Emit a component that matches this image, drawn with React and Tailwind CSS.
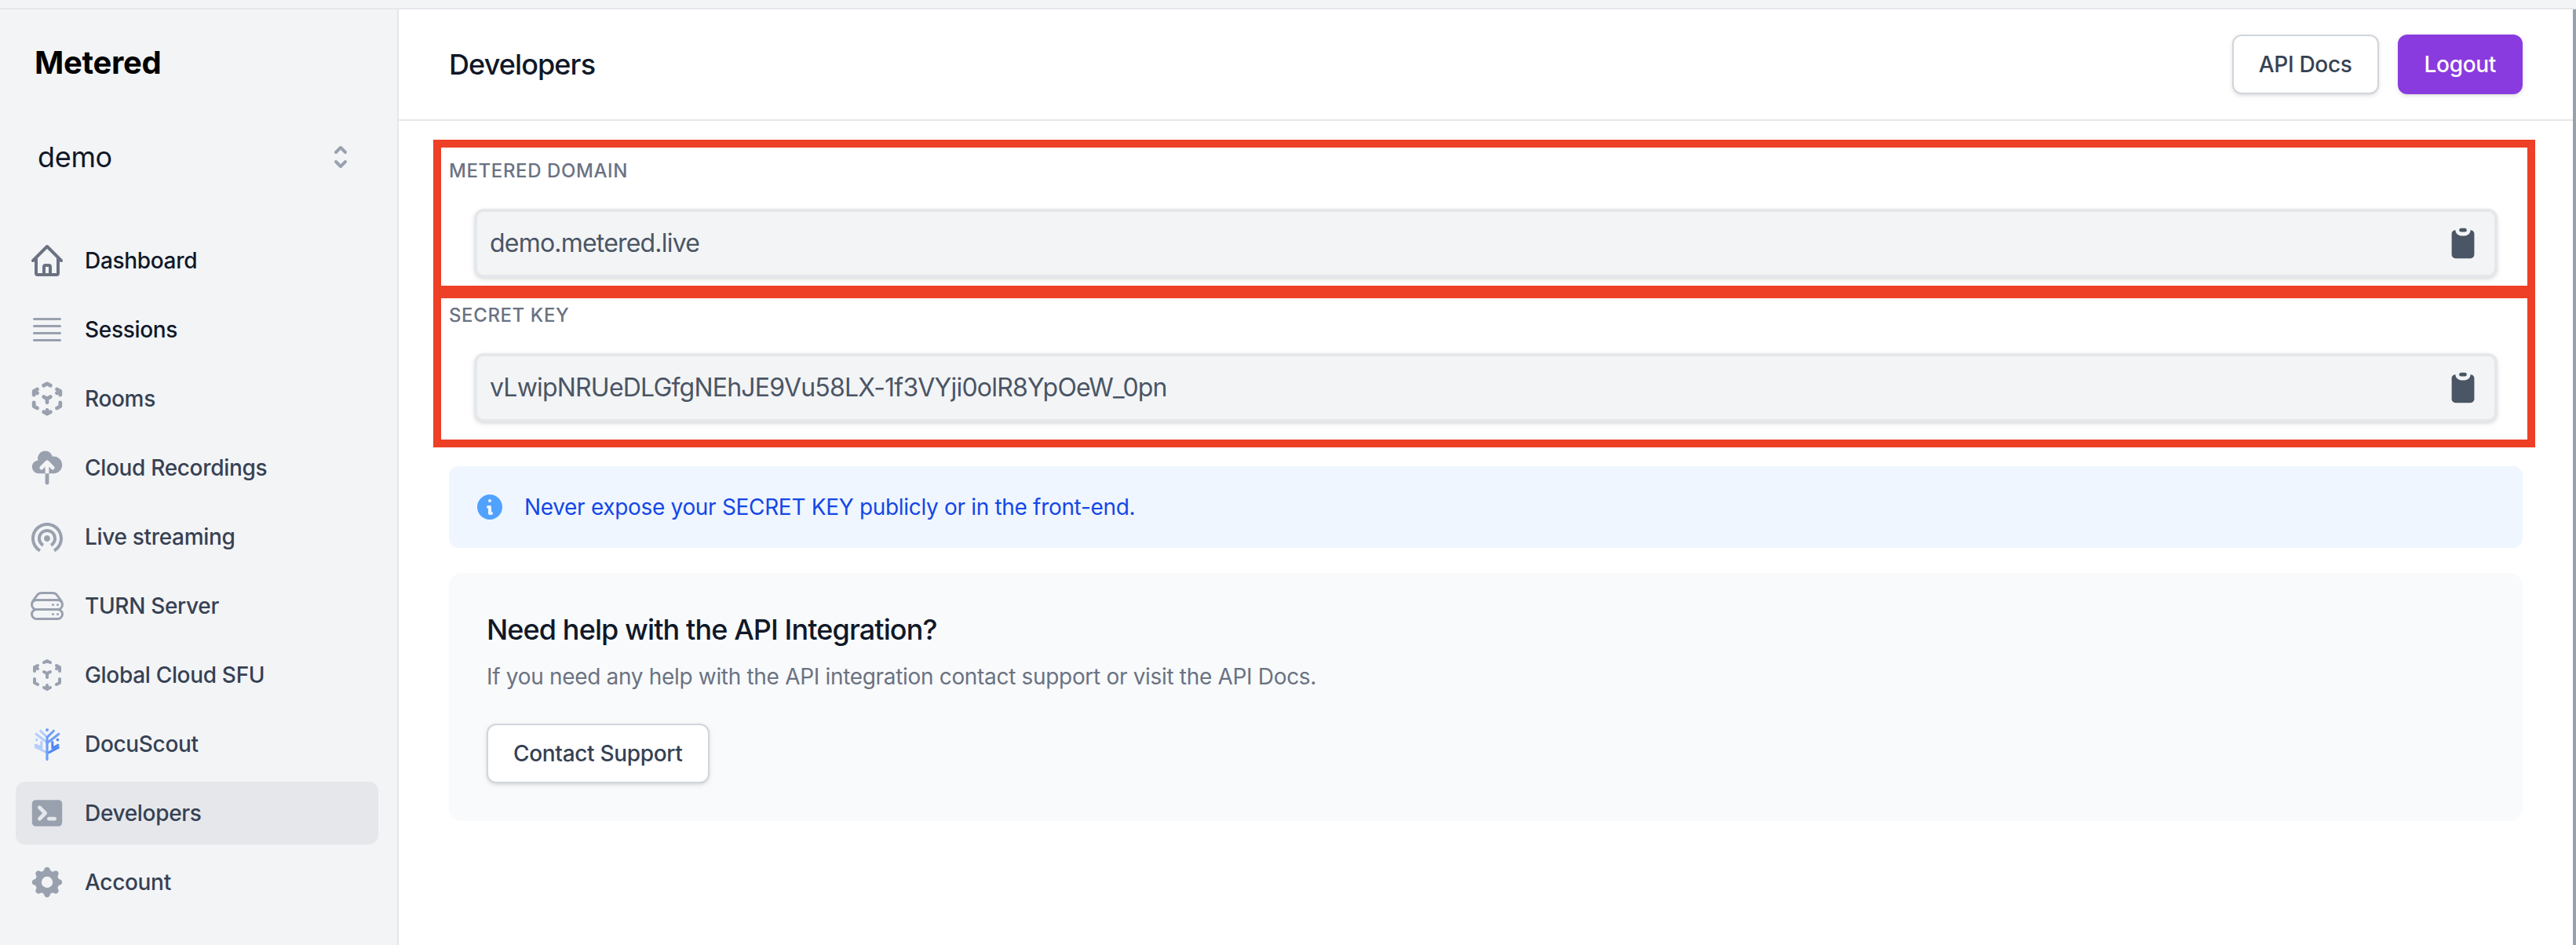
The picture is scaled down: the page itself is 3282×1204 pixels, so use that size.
import React from 'react';
import { HiCog, HiClipboard, HiCloudUpload, HiCubeTransparent, HiInformationCircle, HiOutlineCubeTransparent, HiOutlineHome, HiSelector, HiTerminal } from 'react-icons/hi';
import { HiBars4, HiOutlineServerStack } from 'react-icons/hi2';
import { MdWifiTethering } from 'react-icons/md';

const DocuScoutIcon = ({ className }) => (
  <svg viewBox="0 0 24 24" fill="none" strokeLinecap="round" strokeLinejoin="round" className={className}>
    <g stroke="#b4cdfb" strokeWidth="1.5">
      <path d="M7.8 3.6L12 7.7" />
      <path d="M5 5.6L12 11" />
      <path d="M8.4 10.6v3.6l-3.8-1.6" />
      <path d="M4.6 13.8L11 17" />
    </g>
    <g stroke="#6f9ff6" strokeWidth="1.5">
      <path d="M16.2 3.6L12 7.7" />
      <path d="M19.4 5.6L12 11.4" />
    </g>
    <g stroke="#4f86f3" strokeWidth="1.5">
      <path d="M15.4 10.8v3.8l3.6-2" />
      <path d="M19.2 14.2L13 17.4" />
    </g>
    <path d="M12 8.5V21.8" stroke="#6f9ff6" strokeWidth="1.6" />
    <circle cx="12" cy="3" r="1" fill="#6f9ff6" />
    <circle cx="5.3" cy="9.3" r="0.9" fill="#b4cdfb" />
    <circle cx="18.7" cy="9.3" r="0.9" fill="#4f86f3" />
  </svg>
);

const navItems = [
  { name: 'Dashboard', icon: HiOutlineHome, iconClass: 'text-gray-500', textClass: 'text-gray-900' },
  { name: 'Sessions', icon: HiBars4, iconClass: 'text-gray-400', textClass: 'text-gray-900' },
  { name: 'Rooms', icon: HiCubeTransparent },
  { name: 'Cloud Recordings', icon: HiCloudUpload },
  { name: 'Live streaming', icon: MdWifiTethering },
  { name: 'TURN Server', icon: HiOutlineServerStack },
  { name: 'Global Cloud SFU', icon: HiOutlineCubeTransparent },
  { name: 'DocuScout', icon: DocuScoutIcon },
  { name: 'Developers', icon: HiTerminal, active: true },
  { name: 'Account', icon: HiCog },
];

const Sidebar = () => (
  <aside className="w-[254px] shrink-0 bg-gray-100 border-r border-gray-200 pl-2.5 pr-3 pt-5">
    <div className="pl-3 text-xl font-bold text-black">Metered</div>
    <div className="mt-6 h-11 flex items-center justify-between pl-3.5 pr-3.5">
      <span className="text-lg text-gray-900">demo</span>
      <HiSelector className="h-5 w-5 text-gray-400" />
    </div>
    <nav className="mt-6 space-y-1">
      {navItems.map((item) => {
        const Icon = item.icon;
        return (
          <div
            key={item.name}
            className={`h-10 flex items-center px-2 rounded-md text-sm font-medium ${item.active ? 'bg-gray-200' : ''} ${item.textClass || 'text-gray-700'}`}
          >
            <Icon className={`mr-3 h-6 w-6 shrink-0 ${item.iconClass || 'text-gray-400'}`} />
            {item.name}
          </div>
        );
      })}
    </nav>
  </aside>
);

const Field = ({ label, value, frameClass }) => (
  <div className="relative">
    <div className="text-xs font-medium uppercase tracking-wide text-gray-500">{label}</div>
    <div className="mt-4 mx-4 h-11 flex items-center justify-between bg-gray-100 border-2 border-gray-200 rounded-md shadow-sm pl-2 pr-2">
      <span className="text-base tracking-tight text-gray-600">{value}</span>
      <HiClipboard className="h-6 w-6 text-gray-600" />
    </div>
    {/* red highlight drawn over the field */}
    <div className={`absolute -left-2.5 -right-2 border-[5px] border-[#ee4026] pointer-events-none ${frameClass}`} />
  </div>
);

export default function App() {
  return (
    <div className="[zoom:2] h-[602px] flex flex-col overflow-hidden bg-white font-['Inter',sans-serif] tracking-[-0.01em] antialiased">
      <div className="h-1.5 shrink-0 bg-gray-100 border-b border-gray-200" />
      <div className="flex flex-1 min-h-0">
        <Sidebar />
        <main className="flex-1 min-w-0 border-r-2 border-gray-400">
          <header className="flex items-center justify-between border-b border-gray-200 px-8 py-4">
            <h1 className="text-lg font-medium tracking-tight text-gray-900">Developers</h1>
            <div className="flex gap-3">
              <button className="px-4 py-2 bg-white border border-gray-300 rounded-md shadow-sm text-sm font-medium text-gray-700">API Docs</button>
              <button className="px-4 py-2 bg-[#8a3bdf] border border-transparent rounded-md shadow-sm text-sm font-medium text-white">Logout</button>
            </div>
          </header>

          <div className="px-8 pt-6">
            <div className="space-y-4">
              <Field label="Metered Domain" value="demo.metered.live" frameClass="-top-3 -bottom-2.5" />
              <Field label="Secret Key" value="vLwipNRUeDLGfgNEhJE9Vu58LX-1f3VYji0olR8YpOeW_0pn" frameClass="-top-2 -bottom-4" />
            </div>

            <div className="mt-7 flex items-center bg-blue-50 rounded-md p-4">
              <HiInformationCircle className="h-5 w-5 text-blue-400" />
              <p className="ml-3 text-sm text-blue-700">Never expose your SECRET KEY publicly or in the front-end.</p>
            </div>

            <div className="mt-4 bg-gray-50 rounded-lg p-6">
              <h3 className="text-lg font-medium leading-6 tracking-tight text-gray-900">Need help with the API Integration?</h3>
              <p className="mt-2 text-sm text-gray-500">If you need any help with the API integration contact support or visit the API Docs.</p>
              <button className="mt-5 block px-4 py-2 bg-white border border-gray-300 rounded-md shadow-sm text-sm font-medium text-gray-700">Contact Support</button>
            </div>
          </div>
        </main>
      </div>
    </div>
  );
}
